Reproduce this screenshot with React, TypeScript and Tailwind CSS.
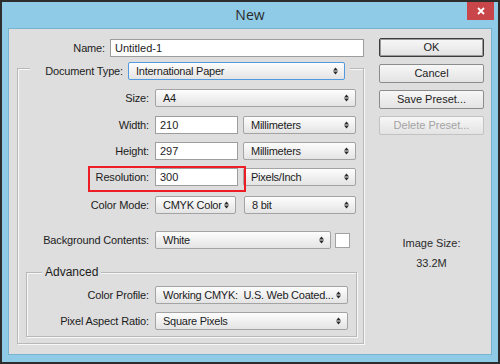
import React from "react";

const font = { fontFamily: '"Liberation Sans", Arial, sans-serif' };

function Arrows() {
  return (
    <svg width="5" height="8" viewBox="0 0 5 8" className="shrink-0">
      <polygon points="0,3.5 2.5,0.5 5,3.5" fill="#2a2a2a" />
      <polygon points="0,4.5 2.5,7.5 5,4.5" fill="#2a2a2a" />
    </svg>
  );
}

function Select({ w, text, focus }: { w: string; text: string; focus?: boolean }) {
  return (
    <div
      className={`${w} h-[18px] shrink-0 flex items-center justify-between pl-[7px] pr-[6px] rounded-[2px] border bg-linear-to-b from-[#fdfdfd] to-[#e4e4e4] ${
        focus ? "border-[#4f9ae0]" : "border-[#a3a3a3]"
      }`}
    >
      <span className="text-[11px] leading-none tracking-[-0.25px] text-[#1c1c1c] whitespace-pre">{text}</span>
      <Arrows />
    </div>
  );
}

function Input({ w, text }: { w: string; text: string }) {
  return (
    <div className={`${w} h-[18px] shrink-0 flex items-center pl-[4px] bg-white border border-[#9d9d9d]`}>
      <span className="text-[11px] leading-none text-[#1c1c1c]">{text}</span>
    </div>
  );
}

function Label({ w, text }: { w: string; text: string }) {
  return (
    <div className={`${w} shrink-0 text-right text-[11px] leading-none tracking-[-0.15px] text-[#1c1c1c] whitespace-nowrap`}>
      {text}
    </div>
  );
}

function Button({ text, kind }: { text: string; kind?: "default" | "disabled" }) {
  const border =
    kind === "default" ? "border-[#3c3c3c]" : kind === "disabled" ? "border-[#c2c2c2]" : "border-[#8c8c8c]";
  const color = kind === "disabled" ? "text-[#a3a3a3]" : "text-[#1c1c1c]";
  return (
    <div
      className={`w-[105px] h-[19px] flex items-center justify-center rounded-[2px] border ${border} bg-linear-to-b from-[#f7f7f7] to-[#e3e3e3] ${
        kind === "default" ? "shadow-[inset_0_0_0_1px_#9a9a9a]" : ""
      }`}
    >
      <span className={`text-[11px] leading-none ${color}`}>{text}</span>
    </div>
  );
}

export default function App() {
  return (
    <div className="w-[500px] h-[364px] bg-[#2d2d2d] p-[2px]" style={font}>
      <div className="w-full h-full bg-[#8fcbe7] flex flex-col px-[6px] pb-[7px]">
        {/* title bar */}
        <div className="h-[26px] shrink-0 grid grid-cols-[1fr_auto_1fr] -mx-[6px]">
          <div />
          <div
            className="pt-[5px] text-[14px] leading-[16px] text-[#2a2a2a]"
            style={{ fontFamily: '"Open Sans", "Noto Sans", sans-serif' }}
          >
            New
          </div>
          <div className="flex justify-end items-start pr-[4px]">
            <div className="w-[27px] h-[18px] bg-[#c8464a] flex items-center justify-center">
              <svg width="8" height="8" viewBox="0 0 8 8">
                <path d="M1 1 L7 7 M7 1 L1 7" stroke="#ffffff" strokeWidth="1.8" />
              </svg>
            </div>
          </div>
        </div>

        {/* panel */}
        <div className="flex-1 bg-[#dedede] border border-[#78b3cf] flex items-start">
          {/* left column */}
          <div className="w-[355px] shrink-0 flex flex-col">
            <div className="mt-[10px] h-[18px] flex items-center">
              <Label w="w-[96px]" text="Name:" />
              <div className="w-[5px]" />
              <Input w="w-[254px]" text="Untitled-1" />
            </div>

            {/* outer group */}
            <div className="relative mt-[11px] ml-[8px] w-[347px] border border-[#b8b8b8] shadow-[inset_1px_1px_0_#f8f8f8,1px_1px_0_#f8f8f8] flex flex-col">
              <div className="-mt-[7px] ml-[12px] w-[320px] h-[18px] bg-[#dedede] flex items-center">
                <Label w="w-[93px]" text="Document Type:" />
                <div className="w-[5px]" />
                <Select w="w-[217px]" text="International Paper" focus />
              </div>

              <div className="mt-[9px] h-[18px] flex items-center">
                <Label w="w-[131px]" text="Size:" />
                <div className="w-[6px]" />
                <Select w="w-[201px]" text="A4" />
              </div>

              <div className="mt-[9px] h-[18px] flex items-center">
                <Label w="w-[131px]" text="Width:" />
                <div className="w-[6px]" />
                <Input w="w-[83px]" text="210" />
                <div className="w-[5px]" />
                <Select w="w-[113px]" text="Millimeters" />
              </div>

              <div className="mt-[8px] h-[18px] flex items-center">
                <Label w="w-[131px]" text="Height:" />
                <div className="w-[6px]" />
                <Input w="w-[83px]" text="297" />
                <div className="w-[5px]" />
                <Select w="w-[113px]" text="Millimeters" />
              </div>

              <div className="mt-[8px] h-[18px] flex items-center">
                <Label w="w-[131px]" text="Resolution:" />
                <div className="w-[6px]" />
                <Input w="w-[83px]" text="300" />
                <div className="w-[5px]" />
                <Select w="w-[113px]" text="Pixels/Inch" />
              </div>

              <div className="mt-[10px] h-[18px] flex items-center">
                <Label w="w-[131px]" text="Color Mode:" />
                <div className="w-[6px]" />
                <Select w="w-[81px]" text="CMYK Color" />
                <div className="w-[8px]" />
                <Select w="w-[112px]" text="8 bit" />
              </div>

              <div className="mt-[17px] h-[18px] flex items-center">
                <Label w="w-[131px]" text="Background Contents:" />
                <div className="w-[6px]" />
                <Select w="w-[176px]" text="White" />
                <div className="w-[4px]" />
                <div className="w-[15px] h-[15px] bg-white border border-[#a3a3a3]" />
              </div>

              {/* advanced group */}
              <div className="mt-[23px] mb-[6px] ml-[8px] w-[331px] border border-[#b8b8b8] shadow-[inset_1px_1px_0_#f8f8f8,1px_1px_0_#f8f8f8] flex flex-col pb-[6px]">
                <div className="-mt-[8px] ml-[15px] w-fit px-[3px] h-[14px] bg-[#dedede] text-[12px] leading-[14px] text-[#1c1c1c]">
                  Advanced
                </div>
                <div className="mt-[7px] h-[18px] flex items-center">
                  <Label w="w-[122px]" text="Color Profile:" />
                  <div className="w-[6px]" />
                  <Select w="w-[193px]" text="Working CMYK:  U.S. Web Coated..." />
                </div>
                <div className="mt-[8px] h-[18px] flex items-center">
                  <Label w="w-[122px]" text="Pixel Aspect Ratio:" />
                  <div className="w-[6px]" />
                  <Select w="w-[193px]" text="Square Pixels" />
                </div>
              </div>

              {/* annotation */}
              <div className="absolute left-[70px] top-[97px] w-[158px] h-[26px] border-2 border-[#ee1c24] pointer-events-none" />
            </div>
          </div>

          {/* right column */}
          <div className="ml-[15px] w-[105px] shrink-0 flex flex-col">
            <div className="mt-[9px]">
              <Button text="OK" kind="default" />
            </div>
            <div className="mt-[7px]">
              <Button text="Cancel" />
            </div>
            <div className="mt-[7px]">
              <Button text="Save Preset..." />
            </div>
            <div className="mt-[7px]">
              <Button text="Delete Preset..." kind="disabled" />
            </div>
            <div className="mt-[100px] text-center text-[11px] leading-[16px] text-[#2a2a2a]">Image Size:</div>
            <div className="mt-[4px] text-center text-[11px] leading-[16px] text-[#2a2a2a]">33.2M</div>
          </div>
        </div>
      </div>
    </div>
  );
}
